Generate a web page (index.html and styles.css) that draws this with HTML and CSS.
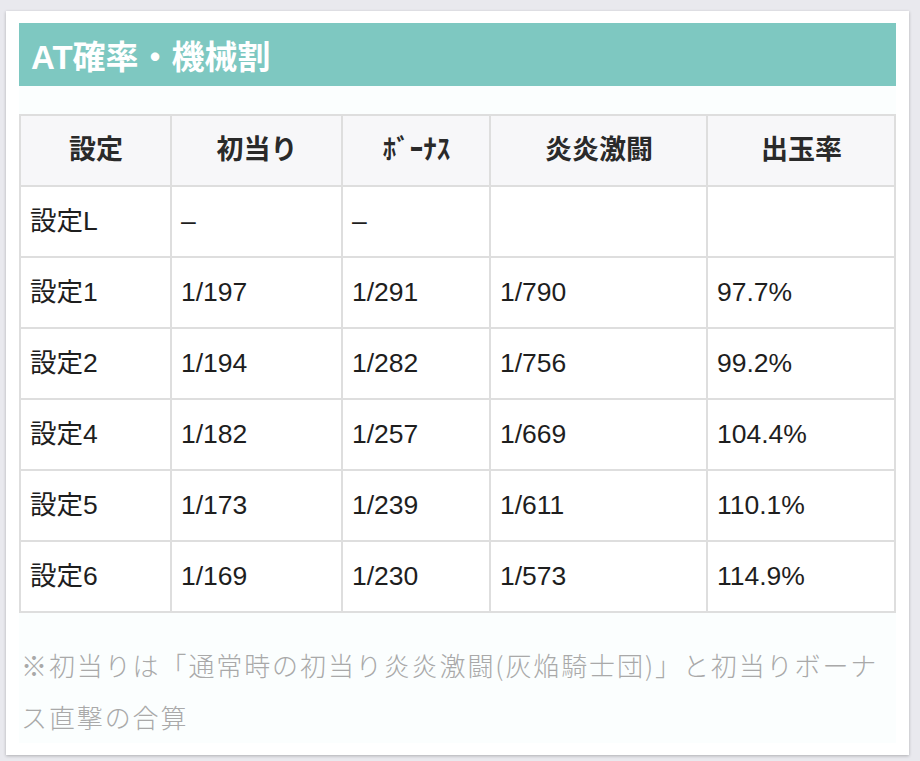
FILE: index.html
```html
<!DOCTYPE html>
<html lang="ja">
<head>
<meta charset="utf-8">
<link rel="stylesheet" href="styles.css">
</head>
<body>
<div class="card">
  <h2 class="title">AT確率・機械割</h2>
  <div class="content">
    <table class="spec">
      <colgroup>
        <col class="c1"><col class="c2"><col class="c3"><col class="c4"><col class="c5">
      </colgroup>
      <thead>
        <tr>
          <th>設定</th>
          <th>初当り</th>
          <th>ﾎﾞｰﾅｽ</th>
          <th>炎炎激闘</th>
          <th>出玉率</th>
        </tr>
      </thead>
      <tbody>
        <tr><td>設定L</td><td>–</td><td>–</td><td></td><td></td></tr>
        <tr><td>設定1</td><td>1/197</td><td>1/291</td><td>1/790</td><td>97.7%</td></tr>
        <tr><td>設定2</td><td>1/194</td><td>1/282</td><td>1/756</td><td>99.2%</td></tr>
        <tr><td>設定4</td><td>1/182</td><td>1/257</td><td>1/669</td><td>104.4%</td></tr>
        <tr><td>設定5</td><td>1/173</td><td>1/239</td><td>1/611</td><td>110.1%</td></tr>
        <tr><td>設定6</td><td>1/169</td><td>1/230</td><td>1/573</td><td>114.9%</td></tr>
      </tbody>
    </table>
    <p class="note">※初当りは「通常時の初当り炎炎激闘(灰焔騎士団)」と初当りボーナス直撃の合算</p>
  </div>
</div>
</body>
</html>
```

FILE: styles.css
```css
html, body {
  margin: 0;
  padding: 0;
  background: #e9e9ee;
}
body {
  padding: 11px 11px 8px 6px;
  font-family: "Liberation Sans", Arial, "Noto Sans CJK JP", sans-serif;
  color: #1e1e1e;
}
.card {
  background: #fff;
  padding: 12px 13px 12px 13px;
  box-shadow: 0 1px 3px rgba(0, 0, 0, 0.25);
}
.title {
  margin: 0;
  height: 63px;
  display: flex;
  align-items: center;
  padding-left: 12px;
  background: #7ec8c1;
  color: #fff;
  font-size: 33px;
  font-weight: bold;
  font-family: "Liberation Sans", Arial, "Noto Sans CJK JP", sans-serif;
}
.content {
  background: #fbfefe;
  padding-top: 28px;
}
.spec {
  width: 100%;
  border-collapse: collapse;
  table-layout: fixed;
  font-size: 26.5px;
  line-height: 39px;
}
.c1 { width: 151px; }
.c2 { width: 171px; }
.c3 { width: 148px; }
.c4 { width: 217px; }
.c5 { width: auto; }
.spec th,
.spec td {
  border: 2px solid #dedede;
  padding: 15px 8px 15px 9px;
  height: 39px;
  text-align: left;
  font-weight: normal;
  background: #fff;
  white-space: nowrap;
  overflow: hidden;
}
.spec th {
  text-align: center;
  font-weight: bold;
  font-size: 27px;
  color: #2a2a2a;
  background-color: #f7f7f9;
  background-image: radial-gradient(#f0f0f3 0.5px, transparent 0.7px);
  background-size: 4px 4px;
}
.note {
  margin: 26px 0 0 2px;
  font-size: 26px;
  line-height: 52px;
  letter-spacing: 1.9px;
  color: #a9a9a9;
  font-family: "Noto Sans CJK JP", sans-serif;
  font-weight: 300;
}
```
